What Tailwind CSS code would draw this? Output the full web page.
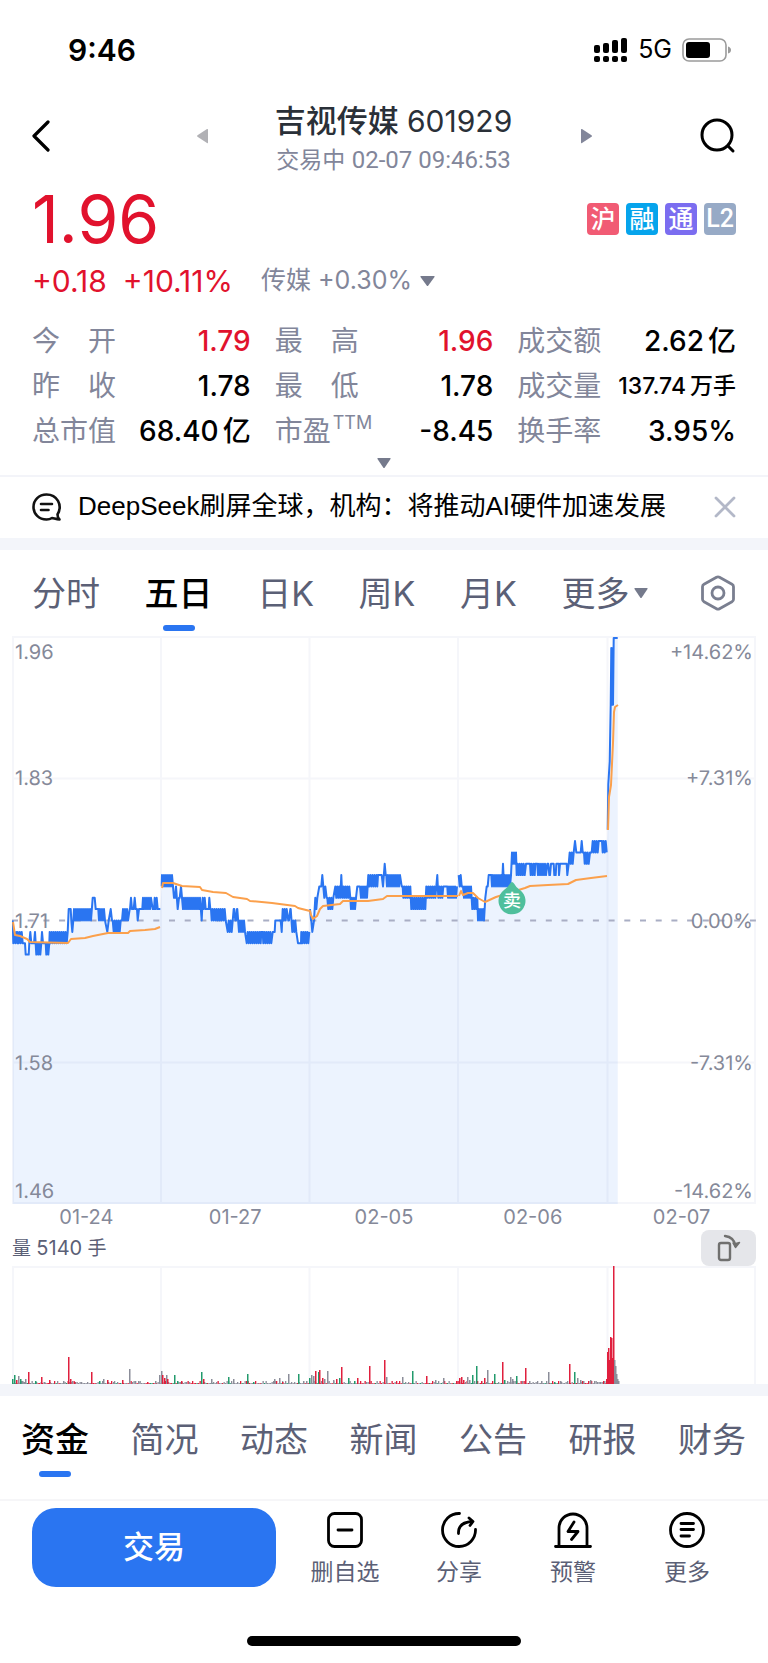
<!DOCTYPE html>
<html lang="zh-CN">
<head>
  <meta charset="UTF-8">
  <meta name="viewport" content="width=device-width, initial-scale=1.0">
  <title>吉视传媒 601929</title>
  <script src="https://cdn.jsdelivr.net/npm/@tailwindcss/browser@4"></script>
</head>
<body class="bg-white text-black font-[Inter,'Noto_Sans_CJK_SC',sans-serif]">

  <!-- Barre d'état -->
  <div class="h-24 pl-[68px] pr-9 pt-1 flex items-center justify-between">
    <span class="text-[30px] font-semibold">9:46</span>
    <div class="flex items-center gap-2.5">
      <svg class="w-[34px] h-6" viewBox="0 0 34 24">
        <rect x="0" y="7" width="6" height="8" rx="2"/><rect x="9" y="5" width="6" height="10" rx="2"/>
        <rect x="18" y="2" width="6" height="13" rx="2"/><rect x="27" y="0" width="6" height="15" rx="2"/>
        <rect x="0" y="18" width="6" height="6" rx="2"/><rect x="9" y="18" width="6" height="6" rx="2"/>
        <rect x="18" y="18" width="6" height="6" rx="2"/><rect x="27" y="18" width="6" height="6" rx="2"/>
      </svg>
      <span class="text-[25px]">5G</span>
      <svg class="w-[50px] h-6" viewBox="0 0 50 24">
        <rect x="1" y="1" width="43" height="22" rx="6" fill="none" stroke="#9b9b9b" stroke-width="1.6"/>
        <rect x="4" y="4" width="24" height="16" rx="3"/>
        <path d="M46 8.500q3 1 3 3.500t-3 3.500z" fill="#9b9b9b"/>
      </svg>
    </div>
  </div>

  <!-- En-tête -->
  <header class="h-20 px-8 flex items-center justify-between">
    <button class="w-[163px]" aria-label="返回">
      <svg class="w-5 h-9" viewBox="0 0 20 36" fill="none" stroke="#000" stroke-width="3.200" stroke-linecap="round" stroke-linejoin="round"><path d="M16 4L2 18l14 14"/></svg>
    </button>
    <div class="flex-1 flex items-center justify-between">
      <button aria-label="上一个"><svg class="w-3.5 h-4" viewBox="0 0 14 16" fill="#b1b1b5"><path d="M13 1.500v13q0 1-1 .4L2.500 8.800q-1-.8 0-1.600L12 1.100q1-.6 1 .4z"/></svg></button>
      <div class="pt-1.5 text-center">
        <h1 class="leading-[42px] text-[31px] font-medium text-[#2a3038]">吉视传媒 <span class="text-[30px] font-normal">601929</span></h1>
        <p class="leading-9 text-[23px] text-[#82869a]">交易中 <span class="font-[Roboto] text-[24px]">02-07 09:46:53</span></p>
      </div>
      <button aria-label="下一个"><svg class="w-3.5 h-4" viewBox="0 0 14 16" fill="#82869a"><path d="M3 1.500v13q0 1 1 .4l9.500-6.100q1-.8 0-1.600L4 1.100q-1-.6-1 .4z"/></svg></button>
    </div>
    <button class="w-[144px] flex justify-end" aria-label="搜索">
      <svg class="w-9 h-9" viewBox="0 0 36 36" fill="none" stroke="#000" stroke-width="3" stroke-linecap="round"><circle cx="17" cy="17" r="15"/><path d="M28 28l5 5"/></svg>
    </button>
  </header>

  <!-- Cours -->
  <section>
    <div class="h-[86px] px-8 flex items-center justify-between">
      <strong class="text-[66px] font-normal text-[#e1122d]">1.96</strong>
      <div class="flex gap-[7px] text-center text-[25px] leading-8 font-medium text-white">
        <span class="w-8 h-8 rounded bg-[#f15b74]">沪</span>
        <span class="w-8 h-8 rounded bg-[#06a4ec]">融</span>
        <span class="w-8 h-8 rounded bg-[#7b6df0]">通</span>
        <span class="w-8 h-8 rounded bg-[#97aac6] font-[Roboto]">L2</span>
      </div>
    </div>
    <div class="h-[38px] px-8 flex items-center text-[30px] text-[#e1122d]">
      <span>+0.18</span>
      <span class="ml-4">+10.11%</span>
      <button class="ml-7 flex items-center gap-2 text-[25px] text-[#82869a]"><span>传媒 +0.30%</span>
        <svg class="w-4 h-3" viewBox="0 0 16 12" fill="#757a8c"><path d="M1 1h13q1 0 .5 1L8.300 10.500q-.8 1-1.600 0L.5 2Q0 1 1 1z"/></svg>
      </button>
    </div>

    <dl class="pt-[19px] px-8 grid grid-cols-3 gap-x-6 text-[28px] leading-[45px]">
      <div class="flex justify-between"><dt class="w-[84px] flex justify-between text-[#82869a]"><span>今</span><span>开</span></dt><dd class="font-medium text-[#e1122d]">1.79</dd></div>
      <div class="flex justify-between"><dt class="w-[84px] flex justify-between text-[#82869a]"><span>最</span><span>高</span></dt><dd class="font-medium text-[#e1122d]">1.96</dd></div>
      <div class="flex justify-between"><dt class="text-[#82869a]">成交额</dt><dd class="font-medium">2.62<span class="ml-1">亿</span></dd></div>
      <div class="flex justify-between"><dt class="w-[84px] flex justify-between text-[#82869a]"><span>昨</span><span>收</span></dt><dd class="font-medium">1.78</dd></div>
      <div class="flex justify-between"><dt class="w-[84px] flex justify-between text-[#82869a]"><span>最</span><span>低</span></dt><dd class="font-medium">1.78</dd></div>
      <div class="flex justify-between"><dt class="text-[#82869a]">成交量</dt><dd class="text-[23px] font-medium whitespace-nowrap">137.74<span class="ml-1">万手</span></dd></div>
      <div class="flex justify-between"><dt class="text-[#82869a]">总市值</dt><dd class="font-medium">68.40<span class="ml-1">亿</span></dd></div>
      <div class="flex justify-between"><dt class="flex text-[#82869a]">市盈<span class="ml-0.5 text-[18px] leading-7">TTM</span></dt><dd class="font-medium">-8.45</dd></div>
      <div class="flex justify-between"><dt class="text-[#82869a]">换手率</dt><dd class="font-medium">3.95%</dd></div>
    </dl>
    <button class="w-full h-[21px] pb-1 flex justify-center items-center" aria-label="展开">
      <svg class="w-4 h-3" viewBox="0 0 16 12" fill="#757a8c"><path d="M2 1h12q1 0 .5 1L8.800 10.500q-.8 1-1.600 0L1.500 2Q1 1 2 1z"/></svg>
    </button>
  </section>

  <!-- Actualité -->
  <div class="h-[63px] px-8 pb-0.5 flex items-center border-t-2 border-[#f3f4f9]">
    <svg class="w-[30px] h-7" viewBox="0 0 30 28" fill="none" stroke="#111" stroke-width="2.600" stroke-linecap="round" stroke-linejoin="round">
      <path d="M25.500 21.500C31 12 25 1.500 14.500 1.500 7 1.500 1.500 7 1.500 14S7 26.500 14.500 26.500c2.500 0 4-.5 5.500-1.500 2.500.5 4.500 1.300 7.500 1.500-1.500-1.500-2-3-2-5z"/><path d="M9 11h11M9 17h7.500"/>
    </svg>
    <a href="#" class="ml-4 font-['Liberation_Sans','Noto_Sans_CJK_SC',sans-serif] text-[26px] whitespace-nowrap">DeepSeek刷屏全球，机构：将推动AI硬件加速发展</a>
    <button class="ml-auto" aria-label="关闭"><svg class="w-[22px] h-[22px]" viewBox="0 0 22 22" stroke="#b3b8c8" stroke-width="2.800" stroke-linecap="round"><path d="M2 2l18 18M20 2L2 20"/></svg></button>
  </div>
  <div class="h-3 bg-[#f3f5fa]"></div>

  <!-- Périodes -->
  <nav class="h-[86px] px-8 flex items-center justify-between text-[34px] text-[#5b6076]">
    <button>分时</button>
    <button class="relative h-full font-medium text-black">五日<span class="absolute bottom-[5px] left-1/2 -translate-x-1/2 w-8 h-[6px] rounded-full bg-[#2a75f1]"></span></button>
    <button>日K</button>
    <button>周K</button>
    <button>月K</button>
    <button class="mr-1.5 flex items-center gap-1">更多<svg class="w-4 h-3" viewBox="0 0 16 12" fill="#757a8c"><path d="M2 1h12q1 0 .5 1L8.800 10.500q-.8 1-1.600 0L1.500 2Q1 1 2 1z"/></svg></button>
    <button aria-label="设置"><svg class="w-9 h-9" viewBox="0 0 36 36" fill="none" stroke="#7a7f90" stroke-width="2.800" stroke-linejoin="round"><path d="M16.500 2.300q1.500-.8 3 0L32 9.300q1.500.8 1.500 2.500v12.400q0 1.700-1.500 2.500l-12.500 7q-1.500.8-3 0L4 26.700q-1.500-.8-1.500-2.500V11.800Q2.500 10.100 4 9.300z"/><circle cx="18" cy="18" r="6"/></svg></button>
  </nav>

  <!-- Graphiques -->
  <main class="px-3">
    <svg class="block w-full" viewBox="0 0 744 568" text-rendering="geometricPrecision">
      <path d="M0 1H743M0 142.500H743M0 426.500H743M0 567H743M1 0V568M149 0V568M297.500 0V568M446 0V568M595.500 0V568M743 0V568" stroke="#f5f6fa" stroke-width="2"/>
      <path id="area" fill="#2a75f1" fill-opacity=".09"/>
      <path d="M0 284.500H744" stroke="#a9aec4" stroke-width="1.800" stroke-dasharray="6 9.700"/>
      <g fill="#858999" font-size="20">
        <text x="3" y="23">1.96</text><text x="3" y="149">1.83</text><text x="3" y="292">1.71</text><text x="3" y="434">1.58</text><text x="3" y="562">1.46</text>
        <g text-anchor="end"><text x="741" y="23">+14.62%</text><text x="741" y="149">+7.31%</text><text x="741" y="292">0.00%</text><text x="741" y="434">-7.31%</text><text x="741" y="562">-14.62%</text></g>
      </g>
      <g id="price" fill="none" stroke="#2a75f1" stroke-width="2" stroke-linejoin="round"></g>
      <g fill="none" stroke="#fba04c" stroke-width="2" stroke-linejoin="round">
        <path d="M1 286L3 299 8 300 15 303 18 306 56 307 59 303 73 302 81 300 96 297 116 297 118 295 133 294 143 293 148 291"/>
        <path d="M150 252L151 247 161 247 170 250 188 251 190 254 201 256 214 257 221 261 235 263 238 265 260 267 283 270 286 272 298 275 299 279 301 283 305 280 308 273 311 270 328 268 331 265 356 265 371 263 375 260 446 260"/>
        <path d="M447 260L449 255 451 259 456 257 461 257 466 262 473 266 484 261 500 256 513 252 518 250 536 249 556 248 564 244 579 242 595 240"/>
        <path d="M596 194L597 161 599 149 601 107 602 76 603 71 606 69"/>
      </g>
      <path d="M500 246q1 0 2 1.500 2 4 6 6.500a13.500 13.500 0 1 1-16 0q4-2.500 6-6.500 1-1.500 2-1.500z" fill="#4fbf9c"/>
      <text x="500" y="271" text-anchor="middle" font-size="18" font-weight="500" fill="#fff">卖</text>
    </svg>
    <div class="grid grid-cols-5 text-center text-[20px] leading-[26px] text-[#858999]">
      <span>01-24</span><span>01-27</span><span>02-05</span><span>02-06</span><span>02-07</span>
    </div>
    <div class="h-9 flex items-center justify-between">
      <span class="text-[19px] text-[#5b6076]">量 <span class="text-[20px]">5140</span> 手</span>
      <button class="w-[55px] h-9 rounded-lg bg-[#e5e6ea] flex items-center justify-center" aria-label="横屏">
        <svg class="w-6 h-7" viewBox="0 0 24 28" fill="none" stroke="#70706f" stroke-width="2.400" stroke-linecap="round" stroke-linejoin="round"><rect x="2" y="9" width="11" height="17" rx="2"/><path d="M8 2q9 1 10.500 10"/><path d="M16 9l2.500 4.500L22.500 8.500l-3.500 1z" stroke-width="1.500" fill="#70706f"/></svg>
      </button>
    </div>
    <svg class="block w-full" viewBox="0 0 744 118">
      <path d="M0 1H743M1 0V118M149 0V118M297.500 0V118M446 0V118M595.500 0V118M743 0V118" stroke="#f5f6fa" stroke-width="2"/>
      <g id="volume"></g>
    </svg>
  </main>
  <div class="h-3 bg-[#f3f5fa]"></div>

  <!-- Rubriques -->
  <nav class="h-[103px] pl-[21px] pr-[22px] pb-4 flex items-center justify-between text-[34px] text-[#5b6076]">
    <button class="relative h-full font-medium text-black">资金<span class="absolute bottom-[6px] left-1/2 -translate-x-1/2 w-8 h-[6px] rounded-full bg-[#2a75f1]"></span></button>
    <button>简况</button>
    <button>动态</button>
    <button>新闻</button>
    <button>公告</button>
    <button>研报</button>
    <button>财务</button>
  </nav>

  <!-- Barre d'actions -->
  <footer class="border-t-2 border-[#f6f6f8] pt-[7px] pb-[17px]">
    <div class="pl-8 pr-6 flex">
      <button class="w-[244px] h-[79px] rounded-3xl bg-[#2a75f1] text-[31px] font-medium text-white">交易</button>
      <div class="flex-1 pl-3 grid grid-cols-4 text-[23px] leading-7 text-[#5b6076]">
        <button class="pt-1 flex flex-col items-center gap-2.5">
          <svg class="w-9 h-9" viewBox="0 0 36 36" fill="none" stroke="#000" stroke-width="2.800" stroke-linecap="round"><rect x="1.500" y="1.500" width="33" height="33" rx="6"/><path d="M11 18h14"/></svg>删自选
        </button>
        <button class="pt-1 flex flex-col items-center gap-2.5">
          <svg class="w-9 h-9" viewBox="0 0 36 36" fill="none" stroke="#000" stroke-width="2.800" stroke-linecap="round" stroke-linejoin="round"><path d="M18.500 1.500A16.500 16.500 0 1 0 34.500 17.500M17.500 21.500Q17 10.500 31 9.500M28 6l4 3.500-3 4"/></svg>分享
        </button>
        <button class="pt-1 flex flex-col items-center gap-2.5">
          <svg class="w-[38px] h-9" viewBox="0 0 38 36" fill="none" stroke="#000" stroke-width="2.800" stroke-linecap="round" stroke-linejoin="round"><path d="M1.500 34.500h35M5 34V16a14 14 0 0 1 28 0V34M20 10l-6 9.500h10l-6.500 8"/></svg>预警
        </button>
        <button class="pt-1 flex flex-col items-center gap-2.5">
          <svg class="w-9 h-9" viewBox="0 0 36 36" fill="none" stroke="#000" stroke-width="2.800" stroke-linecap="round"><circle cx="18" cy="18" r="16.500"/><path d="M12 11.500h12.500M12 17.500h12.500M12 24h8.500"/></svg>更多
        </button>
      </div>
    </div>
    <div class="mt-[49px] mx-auto w-[274px] h-[10px] rounded-full bg-black"></div>
  </footer>

  <script>
    // Cours par jour : [x début, x fin, centimes au-dessus de 1.71, second niveau si ça oscille]
    // x en tiers de pixel
    const days = [
      [[38,38,0],[40,52,-2,-1],[53,70,-1,-2],[71,75,-2],[77,86,-3],[88,96,-2,-1],[98,102,-2],[105,105,-1],[109,124,-3,-2],[126,126,-1],[129,137,-2],[139,148,-3,-2],[149,204,-1,-2],[206,212,1],[214,214,0],[217,217,-1],[220,220,0],[222,274,1,0],[278,284,2],[287,295,1],[297,297,0],[300,316,1,0],[322,322,-1],[326,326,0],[332,332,1],[336,338,0],[341,364,-1,0],[366,386,0,1],[389,390,1],[393,393,2],[396,401,1],[404,404,2],[407,411,1],[413,413,0],[417,427,1],[429,455,2,1],[458,462,1],[464,474,2,1],[478,481,1]],
      [[485,485,3],[486,520,4,3],[522,525,2],[528,528,3],[533,533,1],[537,539,2],[543,543,3],[546,600,2,1],[605,605,0],[608,614,2,1],[617,626,1],[628,628,2],[631,633,1],[635,679,0,1],[683,698,-1,0],[701,703,1],[706,708,0],[711,712,1],[717,737,-1,0],[740,782,-2,-1],[784,788,-1],[790,816,-2,-1],[818,824,-1],[826,842,0],[845,845,-1],[848,861,1,0],[865,867,0],[871,872,1],[877,891,-1,0],[894,903,-2],[904,929,-1,-2]],
      [[930,930,1],[933,934,0],[937,937,-1],[942,942,0],[946,954,2,1],[958,964,3],[967,967,4],[970,977,3,2],[980,982,2],[985,1001,1,2],[1006,1022,3,2],[1024,1024,4],[1027,1051,2,3],[1053,1070,1,2],[1072,1080,3],[1083,1101,2,3],[1105,1132,4,3],[1134,1145,4],[1149,1149,3],[1154,1154,5],[1157,1159,4],[1161,1201,3,4],[1205,1208,3],[1210,1231,2,3],[1234,1278,1,2],[1279,1306,3,2],[1312,1312,4],[1315,1330,2,3],[1334,1342,3],[1344,1372,2,3]],
      [[1376,1376,4],[1379,1387,3,4],[1389,1415,3,2],[1417,1432,1,2],[1434,1454,0,1],[1456,1456,2],[1460,1463,3],[1466,1474,4],[1476,1506,3,4],[1509,1509,5],[1512,1533,3,4],[1536,1549,6,5],[1550,1576,4,5],[1578,1590,5],[1592,1604,4,5],[1606,1612,5],[1614,1638,4,5],[1642,1645,5],[1648,1650,4],[1653,1661,5],[1663,1667,4],[1669,1676,5],[1677,1682,4,5],[1686,1700,5],[1702,1702,4],[1706,1722,5,6],[1725,1725,7],[1729,1742,6],[1745,1745,7],[1748,1752,6],[1754,1768,5,6],[1770,1773,6],[1775,1794,6,7],[1796,1806,7],[1808,1822,6,7]],
      [[1823,1823,8],[1825,1825,12],[1829,1829,14],[1832,1832,19],[1834,1834,24],[1837,1837,19],[1838,1838,24],[1839,1839,19],[1841,1853,24.9]]
    ];
    const y = k => (284.5 - k * 11.35).toFixed(1);
    let area = "M0.7 568";
    let lines = "";
    days.forEach(day => {
      const pts = [];
      day.forEach(([a, b, lo, hi]) => {
        if (hi === undefined) {
          pts.push([a, lo], [b, lo]);
        } else {
          for (let x = a, i = 0; x <= b; x += 3, i++) pts.push([x, i % 2 ? hi : lo]);
        }
      });
      const d = pts.map(([x, k]) => (x / 3 - 12).toFixed(1) + " " + y(k)).join("L");
      lines += `<path d="M${d}"/>`;
      area += "L" + d;
    });
    document.getElementById("price").innerHTML = lines;
    document.getElementById("area").setAttribute("d", area + "V568Z");

    // Volumes : x, hauteur, couleur (r hausse, g baisse, n neutre)
    const colors = { r: "#e01f3d", g: "#229a6c", n: "#8b8d99" };
    const bars = [
      [0,5,"g"],[2,9,"g"],[4,4,"r"],[6,8,"n"],[8,5,"g"],[10,3,"n"],[13,5,"n"],[16,12,"r"],[23,3,"g"],[29,7,"r"],[32,2,"n"],[37,4,"r"],[51,3,"n"],[56,27,"r"],[58,5,"r"],[62,2,"r"],[79,12,"r"],[87,3,"g"],[91,5,"n"],[95,4,"r"],[101,2,"n"],[110,4,"r"],[117,15,"n"],[126,2,"n"],[135,2,"r"],[143,3,"n"],[147,9,"n"],[149,13,"n"],[150,9,"r"],[152,6,"r"],[154,9,"n"],[155,5,"r"],[162,9,"g"],[165,3,"g"],[169,3,"r"],[189,12,"g"],[191,5,"r"],[199,5,"n"],[216,7,"g"],[221,5,"n"],[235,10,"g"],[241,2,"g"],[262,5,"n"],[267,6,"n"],[270,2,"r"],[276,10,"n"],[286,10,"g"],[291,3,"n"],
      [294,3,"n"],[297,6,"g"],[299,9,"n"],[301,8,"n"],[303,13,"r"],[306,12,"g"],[307,14,"r"],[310,6,"r"],[312,5,"n"],[315,13,"n"],[321,4,"n"],[324,5,"r"],[327,6,"g"],[329,17,"r"],[336,6,"g"],[342,3,"g"],[345,6,"r"],[357,18,"r"],[372,24,"r"],[374,7,"n"],[390,7,"n"],[400,13,"g"],[414,8,"r"],[423,4,"n"],[431,6,"n"],[444,3,"r"],[447,6,"r"],[449,7,"r"],[451,4,"r"],[455,7,"n"],[457,4,"n"],[460,9,"g"],[464,18,"g"],[469,3,"r"],[472,6,"r"],[475,14,"n"],[482,10,"g"],[490,22,"r"],[492,4,"g"],[498,7,"n"],[500,5,"n"],[504,8,"g"],[513,16,"r"],[517,3,"n"],[529,3,"n"],[536,12,"n"],[542,2,"g"],[548,3,"n"],[557,20,"r"],[562,12,"g"],[565,6,"n"],[568,4,"n"],[571,3,"n"],[578,4,"n"],[592,3,"n"],
      [594,5,"r"],[595,32,"r"],[596,36,"r"],[597,24,"r"],[598,47,"r"],[599,46,"r"],[600,26,"r"],[601,118,"r"],[602,24,"n"],[603,18,"n"],[604,10,"n"],[605,5,"n"],[606,3,"n"]
    ];
    let vol = "";
    for (let x = 0; x < 606; x += 1.5) {
      const n = Math.floor(Math.abs(Math.sin(x * 12.9)) * 43758) % 10;
      const h = n > 7 ? 3 : n > 5 ? 2 : 1;
      vol += `<rect x="${x}" y="${118 - h}" width="1.3" height="${h}" fill="${n % 4 == 0 ? colors.r : n % 5 == 0 ? colors.g : colors.n}"/>`;
    }
    bars.forEach(([x, h, c]) => {
      vol += `<rect x="${x}" y="${118 - h}" width="1.5" height="${h}" fill="${colors[c]}"/>`;
    });
    document.getElementById("volume").innerHTML = vol;
  </script>
</body>
</html>
